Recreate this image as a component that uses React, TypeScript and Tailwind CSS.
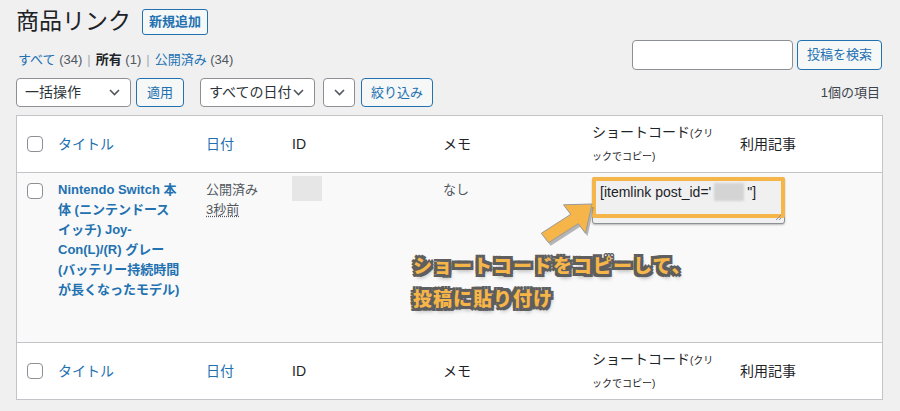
import React from 'react';

const font = "font-['Liberation_Sans','Noto_Sans_CJK_JP',sans-serif]";

function Chevron() {
  return (
    <svg width="11" height="7" viewBox="0 0 11 7" fill="none" className="shrink-0">
      <path d="M1 1l4.5 4.5L10 1" stroke="#50575e" strokeWidth="1.6" />
    </svg>
  );
}

function Checkbox() {
  return <span className="block w-4 h-4 ml-[10px] rounded-[4px] border border-[#8c8f94] bg-white" />;
}

function Select({ label, w }: { label: string; w: string }) {
  return (
    <div className={`${w} h-[29px] flex items-center justify-between pl-2 pr-2.5 bg-white border border-[#8c8f94] rounded-[4px] text-[14px] text-[#2c3338]`}>
      <span>{label}</span>
      <Chevron />
    </div>
  );
}

function Btn({ children, w }: { children: React.ReactNode; w: string }) {
  return (
    <button className={`${w} h-[29px] flex items-center justify-center bg-[#f6f7f7] border border-[#2271b1] rounded-[4px] text-[13px] text-[#2271b1]`}>
      {children}
    </button>
  );
}

const cols = 'grid grid-cols-[33px_148px_86px_151px_149px_148px_1fr]';

function HeaderRow({ top }: { top?: boolean }) {
  return (
    <div className={`${cols} h-[57px] items-center bg-white text-[14px] text-[#1d2327] ${top ? 'border-b border-[#c3c4c7]' : 'border-t border-[#c3c4c7]'}`}>
      <Checkbox />
      <span className="pl-2 text-[#2271b1]">タイトル</span>
      <span className="pl-2 text-[#2271b1]">日付</span>
      <span className="pl-2">ID</span>
      <span className="pl-2">メモ</span>
      <div className="pl-2 leading-[23px] whitespace-nowrap">
        <div>
          ショートコード<span className="text-[10px]">(クリ</span>
        </div>
        <div className="text-[10px]">ックでコピー)</div>
      </div>
      <span className="pl-2">利用記事</span>
    </div>
  );
}

export default function App() {
  return (
    <div className={`${font} min-h-[411px] bg-[#f0f0f1] pl-4 pr-[17px] pt-[6px] text-[#3c434a]`}>
      <div className="flex items-center gap-[11px]">
        <h1 className="text-[23px] leading-[30px] text-[#1d2327]">商品リンク</h1>
        <button className="h-[26px] px-[6px] mt-[2px] bg-[#f6f7f7] border border-[#2271b1] rounded-[3px] text-[13px] font-semibold text-[#2271b1]">
          新規追加
        </button>
      </div>

      <div className="mt-1 flex justify-between">
        <div className="pt-[12px] text-[13px] leading-4">
          <span className="ml-[2px] text-[#2271b1]">すべて</span> <span className="text-[#50575e]">(34)</span>
          <span className="mx-[5px] text-[#a7aaad]">|</span>
          <span className="font-bold text-[#1d2327]">所有</span> <span className="text-[#50575e]">(1)</span>
          <span className="mx-[5px] text-[#a7aaad]">|</span>
          <span className="text-[#2271b1]">公開済み</span> <span className="text-[#50575e]">(34)</span>
        </div>
        <div className="flex gap-[4px] mr-[1px]">
          <div className="w-[161px] h-[30px] bg-white border border-[#8c8f94] rounded-[4px]" />
          <button className="w-[85px] h-[30px] bg-[#f6f7f7] border border-[#2271b1] rounded-[4px] text-[13px] text-[#2271b1]">
            投稿を検索
          </button>
        </div>
      </div>

      <div className="mt-2 flex items-center">
        <Select label="一括操作" w="w-[115px]" />
        <div className="ml-[5px]">
          <Btn w="w-[48px]">適用</Btn>
        </div>
        <div className="ml-[16px]">
          <Select label="すべての日付" w="w-[115px]" />
        </div>
        <div className="ml-[8px] w-[32px] h-[29px] flex items-center justify-center bg-white border border-[#8c8f94] rounded-[4px]">
          <Chevron />
        </div>
        <div className="ml-[6px]">
          <Btn w="w-[72px]">絞り込み</Btn>
        </div>
        <span className="ml-auto mr-[3px] text-[13px] text-[#3c434a]">1個の項目</span>
      </div>

      <div className="mt-2 border border-[#c3c4c7] bg-white">
        <HeaderRow top />

        <div className={`${cols} relative h-[169px] bg-[#f9f9f9] text-[13px] items-start`}>
          <div className="pt-[10px]">
            <Checkbox />
          </div>
          <div className="pl-2 pt-[7px] leading-5 font-bold text-[#2271b1] whitespace-nowrap">
            Nintendo Switch 本<br />
            体 (ニンテンドース<br />
            イッチ) Joy-<br />
            Con(L)/(R) グレー<br />
            (バッテリー持続時間<br />
            が長くなったモデル)
          </div>
          <div className="pl-2 pt-[7px] leading-5 text-[#50575e]">
            <div>公開済み</div>
            <div className="underline decoration-dotted underline-offset-2">3秒前</div>
          </div>
          <div className="pl-2 pt-[3px]">
            <div className="w-[30px] h-[25px] bg-[#e6e6e6]" />
          </div>
          <div className="pl-2 pt-[7px] leading-5 text-[#50575e]">なし</div>
          <div className="pl-2 pt-[4px]">
            <div className="relative w-[193px] h-[47px] bg-[#f0f0f0] border border-[#8c8f94] rounded-[3px] shadow-[0_1px_2px_rgba(0,0,0,0.25)]">
              <div className="absolute -left-px -top-px w-[193px] h-[41px] border-[4px] border-[#f6b548] rounded-[2px]" />
              <div className="pl-[7px] pt-[4px] text-[14px] leading-5 text-[#1d2327] flex items-center whitespace-nowrap">
                [itemlink post_id='
                <span className="inline-block w-[30px] h-[18px] mx-[3px] bg-[#d4d4d4] blur-[1px]" />"]
              </div>
              <svg className="absolute right-[2px] bottom-[2px]" width="7" height="7" viewBox="0 0 7 7">
                <path d="M6 1L1 6M6 4L4 6" stroke="#8c8f94" strokeWidth="1" />
              </svg>
            </div>
          </div>
          <div />

          <svg className="absolute left-[518px] top-[22px]" width="66" height="52" viewBox="0 0 66 52">
            <polygon
              points="8.3,41.3 37.8,22.3 30.5,12.8 59,12 52.5,41.2 45.2,31.7 15.7,50.7"
              fill="#7d7d7d"
              opacity="0.55"
            />
            <polygon
              points="6.3,38.3 35.8,19.3 28.5,9.8 57,9 50.5,38.2 43.2,28.7 13.7,47.7"
              fill="#f6b548"
              stroke="#9a9a9a"
              strokeWidth="1"
              strokeLinejoin="round"
            />
          </svg>

          <div className="absolute left-[396px] top-[77px] text-[19px] leading-[33px] tracking-[1px] font-black text-[#f6b548] whitespace-nowrap [text-shadow:3px_3px_0_#5e5e5e,-3px_-3px_0_#5e5e5e,3px_-3px_0_#5e5e5e,-3px_3px_0_#5e5e5e,0_3px_0_#5e5e5e,3px_0_0_#5e5e5e,0_-3px_0_#5e5e5e,-3px_0_0_#5e5e5e,2px_4px_4px_rgba(0,0,0,0.35)]">
            <div>ショートコードをコピーして、</div>
            <div>投稿に貼り付け</div>
          </div>
        </div>

        <HeaderRow />
      </div>
    </div>
  );
}
